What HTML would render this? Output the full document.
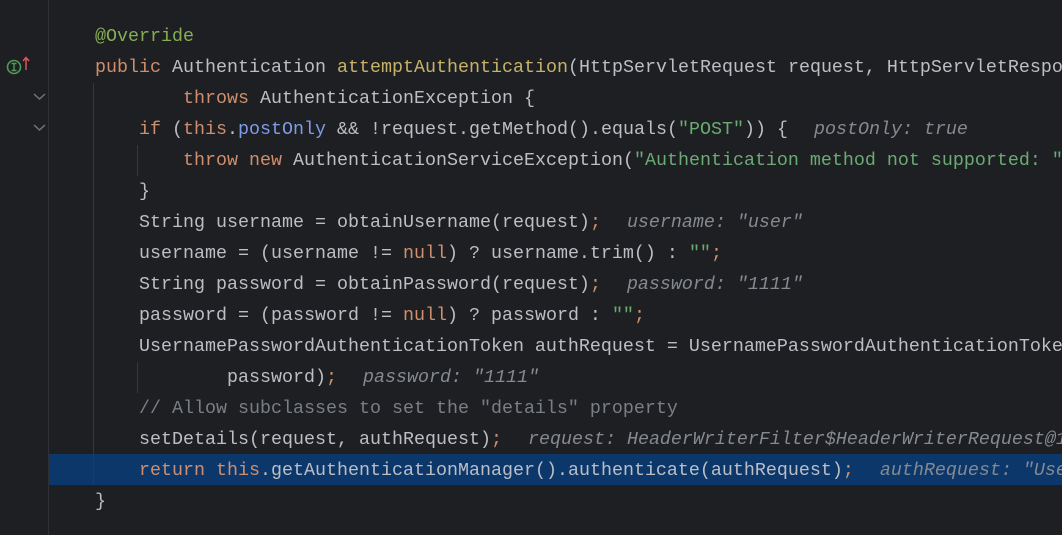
<!DOCTYPE html>
<html><head><meta charset="utf-8"><style>
body{margin:0;width:1062px;height:535px;background:#1e1f22;overflow:hidden;position:relative;font-family:"Liberation Mono",monospace;font-size:18.33px;color:#bcbec4}
.gut{position:absolute;left:48px;top:0;width:1px;height:535px;background:#2f3134}
.l{position:absolute;left:0;padding-left:7px;height:31px;line-height:31px;white-space:pre;width:1055px;overflow:hidden}
.hl{position:absolute;left:49px;top:454px;width:1013px;height:31px;background:#0c376b}
.k{color:#cf8e6d}.a{color:#86ad57}.m{color:#c7b26a}.f{color:#7f9ce8}.s{color:#6aab73}.c{color:#7a7e85}
.h{color:#858990;font-style:italic;margin-left:26px}
.g{position:absolute;width:1px;background:#35373b}
</style></head><body>
<div class="gut"></div>
<div class="hl"></div>
<div class="g" style="left:93px;top:83px;height:402px"></div>
<div class="g" style="left:137px;top:145px;height:31px"></div>
<div class="g" style="left:137px;top:362px;height:31px"></div>
<svg style="position:absolute;left:4px;top:56px" width="26" height="22" viewBox="0 0 26 22">
<circle cx="10" cy="11" r="6.5" fill="none" stroke="#4f9a56" stroke-width="1.6"/>
<path d="M7.5 7.5h5M10 7.5v7M7.5 14.5h5" stroke="#4f9a56" stroke-width="1.4" fill="none"/>
<path d="M22 14V2M19 5l3-3.5 3 3.5" stroke="#e0545a" stroke-width="1.5" fill="none"/>
</svg>
<svg style="position:absolute;left:33px;top:92px" width="14" height="10"><path d="M1 2l5.5 5 5.5-5" stroke="#6f737a" stroke-width="1.5" fill="none"/></svg>
<svg style="position:absolute;left:33px;top:123px" width="14" height="10"><path d="M1 2l5.5 5 5.5-5" stroke="#6f737a" stroke-width="1.5" fill="none"/></svg>
<div class="l" style="top:21px">        <span class="a">@Override</span></div>
<div class="l" style="top:52px">        <span class="k">public</span> Authentication <span class="m">attemptAuthentication</span>(HttpServletRequest request, HttpServletResponse response)</div>
<div class="l" style="top:83px">                <span class="k">throws</span> AuthenticationException {</div>
<div class="l" style="top:114px">            <span class="k">if</span> (<span class="k">this</span>.<span class="f">postOnly</span> &amp;&amp; !request.getMethod().equals(<span class="s">"POST"</span>)) {<span class="h">postOnly: true</span></div>
<div class="l" style="top:145px">                <span class="k">throw new</span> AuthenticationServiceException(<span class="s">"Authentication method not supported: "</span></div>
<div class="l" style="top:176px">            }</div>
<div class="l" style="top:207px">            String username = obtainUsername(request)<span class="k">;</span><span class="h">username: "user"</span></div>
<div class="l" style="top:238px">            username = (username != <span class="k">null</span>) ? username.trim() : <span class="s">""</span><span class="k">;</span></div>
<div class="l" style="top:269px">            String password = obtainPassword(request)<span class="k">;</span><span class="h">password: "1111"</span></div>
<div class="l" style="top:300px">            password = (password != <span class="k">null</span>) ? password : <span class="s">""</span><span class="k">;</span></div>
<div class="l" style="top:331px">            UsernamePasswordAuthenticationToken authRequest = UsernamePasswordAuthenticationToken</div>
<div class="l" style="top:362px">                    password)<span class="k">;</span><span class="h">password: "1111"</span></div>
<div class="l" style="top:393px">            <span class="c">// Allow subclasses to set the "details" property</span></div>
<div class="l" style="top:424px">            setDetails(request, authRequest)<span class="k">;</span><span class="h">request: HeaderWriterFilter$HeaderWriterRequest@1</span></div>
<div class="l" style="top:455px">            <span class="k">return this</span>.getAuthenticationManager().authenticate(authRequest)<span class="k">;</span><span class="h">authRequest: "UsernamePassword</span></div>
<div class="l" style="top:486px">        }</div>
</body></html>
